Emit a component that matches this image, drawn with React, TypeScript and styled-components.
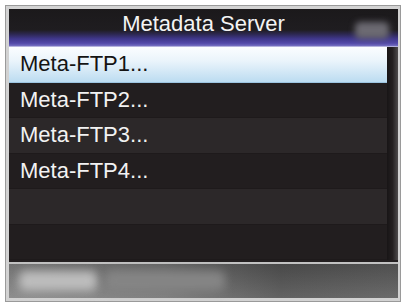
import styled, { createGlobalStyle } from "styled-components";

const GlobalStyle = createGlobalStyle`
  html, body {
    margin: 0;
    padding: 0;
    background: #ffffff;
  }
  body {
    font-family: "Liberation Sans", Arial, sans-serif;
  }
`;

const servers = ["Meta-FTP1...", "Meta-FTP2...", "Meta-FTP3...", "Meta-FTP4...", "", ""];

export default function App() {
  return (
    <>
      <GlobalStyle />
      <Page>
        <Frame>
          <Screen>
            <Header>
              <span />
              <Title>Metadata Server</Title>
              <StatusBlob />
            </Header>
            <ListArea>
              <List>
                {servers.map((name, i) => (
                  <Row key={i} $selected={i === 0} $alt={i % 2 === 0}>
                    {name}
                  </Row>
                ))}
              </List>
              <ScrollTrack />
            </ListArea>
            <Footer>
              <FooterGlow $width={78} $tone="#bdbdbd" />
              <FooterGlow $width={120} $tone="#858585" />
            </Footer>
          </Screen>
        </Frame>
      </Page>
    </>
  );
}

const Page = styled.div`
  width: 403px;
  height: 304px;
  padding: 5px 0 0 5px;
  box-sizing: border-box;
`;

const Frame = styled.div`
  width: 396px;
  height: 297px;
  box-sizing: border-box;
  border: 1px solid #9a9a9a;
  background: #d2d2d2;
  padding: 3px 2px 3px 3px;
`;

const Screen = styled.div`
  height: 100%;
  display: grid;
  grid-template-rows: 38px 1fr 2px 36px;
  background: #231f20;
`;

const Header = styled.div`
  display: grid;
  grid-template-columns: 1fr auto 1fr;
  align-items: start;
  background: linear-gradient(
    to bottom,
    #1b191b 0%,
    #1f1d20 55%,
    #2c2750 66%,
    #3f378a 78%,
    #5249a8 90%,
    #6e68bd 96%,
    #d6d6ec 100%
  );
`;

const Title = styled.div`
  color: #f4f4f4;
  font-size: 22px;
  line-height: 26px;
  padding-top: 2px;
`;

const StatusBlob = styled.div`
  justify-self: end;
  margin-right: 9px;
  margin-top: 13px;
  width: 34px;
  height: 17px;
  border-radius: 5px;
  background: #6c6a72;
  filter: blur(3px);
`;

const ListArea = styled.div`
  display: grid;
  grid-template-columns: 1fr 11px;
  min-height: 0;
`;

const List = styled.div`
  display: grid;
  grid-template-rows: repeat(6, 1fr);
`;

const Row = styled.div<{ $selected: boolean; $alt: boolean }>`
  display: flex;
  align-items: center;
  padding-left: 11px;
  font-size: 22px;
  color: ${(p) => (p.$selected ? "#141414" : "#f2f2f2")};
  background: ${(p) =>
    p.$selected
      ? "linear-gradient(to bottom, #fbfdff 0%, #eaf4fb 40%, #bcdcf1 100%)"
      : p.$alt
      ? "#2c2829"
      : "#221e1f"};
  border-bottom: 1px solid ${(p) => (p.$selected ? "#9cc4e0" : "#1e1a1b")};
`;

const ScrollTrack = styled.div`
  background: linear-gradient(to right, #181516 0%, #242021 50%, #4e4b4c 100%);
`;

const Footer = styled.div`
  grid-row: 4;
  display: flex;
  align-items: center;
  gap: 8px;
  padding-left: 10px;
  border-top: 2px solid #c2c2c2;
  background:
    linear-gradient(to bottom, rgba(0, 0, 0, 0.15), rgba(255, 255, 255, 0.08)),
    linear-gradient(to right, #858585 0%, #767676 40%, #555555 70%, #5e5e5e 100%);
`;

const FooterGlow = styled.span<{ $width: number; $tone: string }>`
  width: ${(p) => p.$width}px;
  height: 20px;
  border-radius: 6px;
  background: ${(p) => p.$tone};
  filter: blur(5px);
`;
